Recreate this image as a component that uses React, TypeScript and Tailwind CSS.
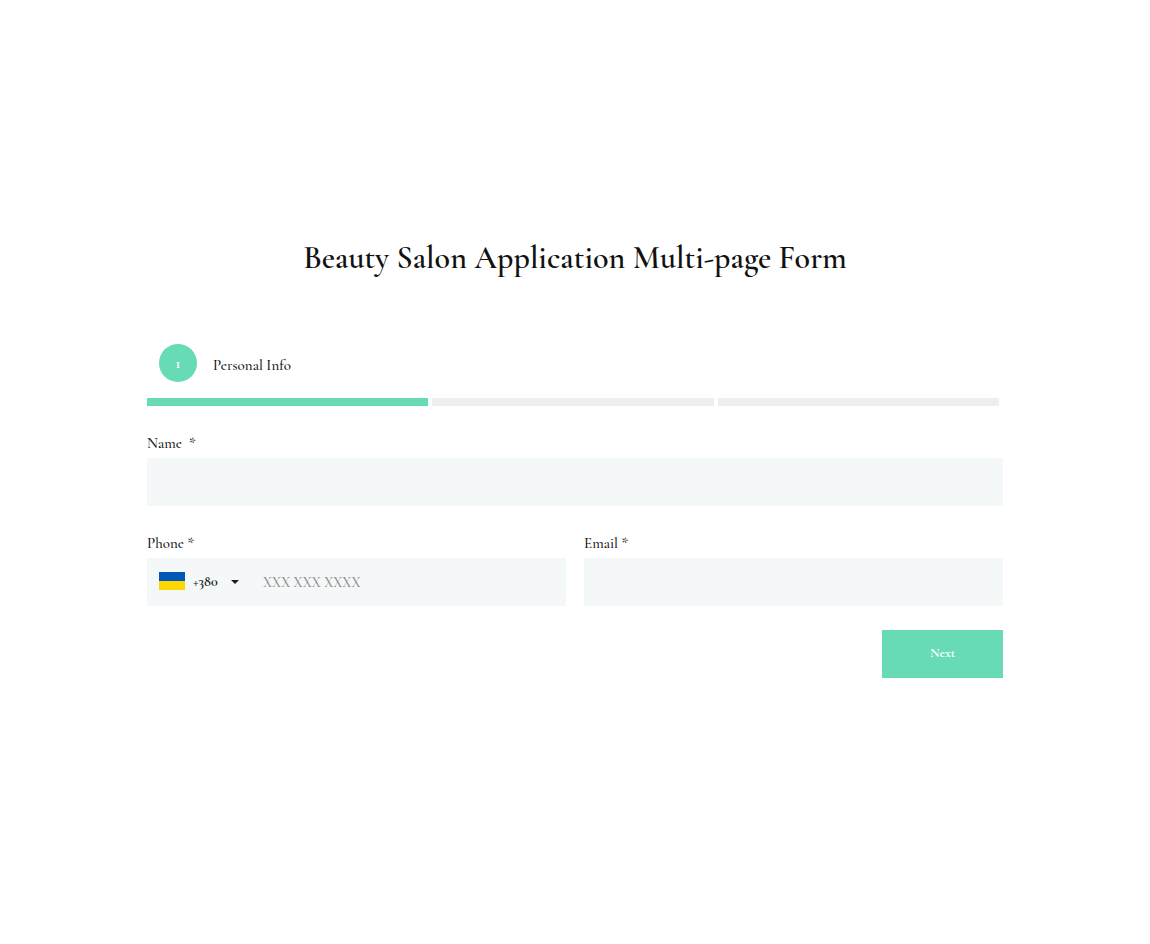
import { useState } from "react";
import type { ReactNode } from "react";

const STEPS = ["Personal Info", "Services", "Experience"];

function Field({ id, label, children }: { id: string; label: ReactNode; children: ReactNode }) {
  return (
    <div className="flex min-w-0 flex-col gap-1">
      <label htmlFor={id} className="pt-0.5 text-[15px] leading-[22px] font-medium whitespace-pre">
        {label}
      </label>
      {children}
    </div>
  );
}

function UkraineFlag() {
  return (
    <svg viewBox="0 0 26 18" className="mb-0.5 h-[18px] w-[26px] shrink-0" aria-hidden="true">
      <rect width="26" height="9" fill="#0057b8" />
      <rect y="9" width="26" height="9" fill="#ffd700" />
    </svg>
  );
}

export default function App() {
  const [step] = useState(0);
  const input = "h-12 w-full min-w-0 bg-[#f4f8f9] px-3 text-[14px] outline-none";

  return (
    <main className="flex min-h-screen flex-col bg-white px-6 pt-[238px] pb-16 font-['Cormorant_Garamond','Liberation_Serif',serif] text-[#111111]">
      <form className="mx-auto flex w-full max-w-[856px] flex-col" onSubmit={(e) => e.preventDefault()}>
        <h1 className="text-center text-[32px] leading-10 font-semibold">Beauty Salon Application Multi-page Form</h1>

        <div className="mt-[66px] flex items-center gap-4 px-3">
          <span className="flex size-[38px] items-center justify-center rounded-full bg-[#67dbb5] text-[15px] font-bold text-white">
            {step + 1}
          </span>
          <span className="pt-1 text-[15px] leading-6 font-medium">{STEPS[step]}</span>
        </div>

        <div className="mt-4 flex gap-1 pr-1">
          {STEPS.map((name, i) => (
            <div key={name} className={i <= step ? "h-2 flex-1 bg-[#67dbb5]" : "h-2 flex-1 bg-[#eeeeee]"} />
          ))}
        </div>

        <div className="mt-6 flex flex-col gap-6">
          <Field id="name" label="Name  *">
            <input id="name" type="text" required className={input} />
          </Field>

          <div className="grid grid-cols-2 gap-[18px]">
            <Field id="phone" label="Phone *">
              <div className="flex h-12 items-center bg-[#f4f8f9] pl-3">
                <UkraineFlag />
                <select
                  aria-label="Country code"
                  className="ml-2 w-[38px] shrink-0 appearance-none bg-transparent pb-0.5 text-[14px] font-semibold outline-none"
                >
                  <option>+380</option>
                </select>
                <svg viewBox="0 0 8 4" className="h-1 w-2 shrink-0" aria-hidden="true">
                  <path d="M0 0h8L4 4z" fill="#1b1b1b" />
                </svg>
                <input
                  id="phone"
                  type="tel"
                  required
                  placeholder="XXX XXX XXXX"
                  className="ml-3 h-12 w-full min-w-0 bg-transparent px-3 text-[14px] font-medium outline-none placeholder:text-[#8c8c8c]"
                />
              </div>
            </Field>
            <Field id="email" label="Email *">
              <input id="email" type="email" required className={input} />
            </Field>
          </div>

          <button type="submit" className="h-12 w-[121px] self-end bg-[#67dbb5] text-[13px] font-bold text-white">
            Next
          </button>
        </div>
      </form>
    </main>
  );
}
